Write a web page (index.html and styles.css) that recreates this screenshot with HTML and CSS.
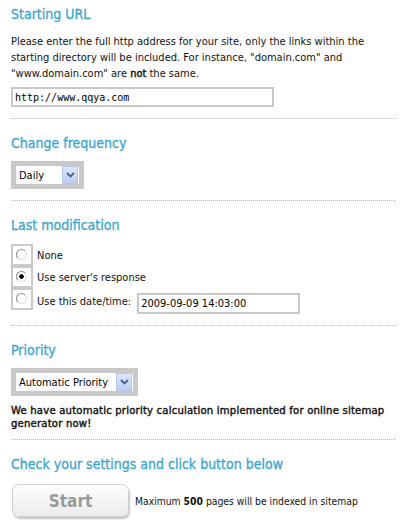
FILE: index.html
```html
<!DOCTYPE html>
<html lang="en">
<head>
    <meta charset="UTF-8">
    <title>Sitemap Generator</title>
    <link rel="stylesheet" href="styles.css">
</head>
<body>
    <form id="generator">
        <div class="section first">
            <h2>Starting URL</h2>
            <p class="hint">Please enter the full http address for your site, only the links within the starting directory will be included. For instance, "domain.com" and "www.domain.com" are <b>not</b> the same.</p>
            <input type="text" class="url-input" value="http://www.qqya.com">
        </div>

        <div class="section">
            <h2>Change frequency</h2>
            <div class="select-box">
                <select class="freq">
                    <option>Daily</option>
                    <option>Weekly</option>
                    <option>Monthly</option>
                </select>
                <span class="arrow"><svg width="9" height="6" viewBox="0 0 9 6"><path d="M1 1 L4.5 4.5 L8 1" fill="none" stroke="#4c5f86" stroke-width="1.8"/></svg></span>
            </div>
        </div>

        <div class="section">
            <h2>Last modification</h2>
            <div class="radios">
                <label class="radio-row">
                    <span class="radio-box"><input type="radio" name="lastmod"></span>
                    <span>None</span>
                </label>
                <label class="radio-row">
                    <span class="radio-box"><input type="radio" name="lastmod" checked></span>
                    <span>Use server's response</span>
                </label>
                <label class="radio-row with-date">
                    <span class="radio-box"><input type="radio" name="lastmod"></span>
                    <span>Use this date/time:</span>
                    <input type="text" class="date-input" value="2009-09-09 14:03:00">
                </label>
            </div>
        </div>

        <div class="section">
            <h2>Priority</h2>
            <div class="select-box">
                <select class="prio">
                    <option>Automatic Priority</option>
                    <option>None</option>
                </select>
                <span class="arrow"><svg width="9" height="6" viewBox="0 0 9 6"><path d="M1 1 L4.5 4.5 L8 1" fill="none" stroke="#4c5f86" stroke-width="1.8"/></svg></span>
            </div>
            <p class="note">We have automatic priority calculation implemented for online sitemap generator now!</p>
        </div>

        <div class="section last">
            <h2>Check your settings and click button below</h2>
            <div class="submit-row">
                <button type="button" class="start">Start</button>
                <span class="limit">Maximum <b>500</b> pages will be indexed in sitemap</span>
            </div>
        </div>
    </form>
</body>
</html>
```

FILE: styles.css
```css
body {
    margin: 0;
    background: #fff;
    color: #111;
    font-family: "DejaVu Sans Condensed", "DejaVu Sans", sans-serif;
    font-stretch: condensed;
    font-size: 11px;
}

#generator {
    width: 385px;
    padding-left: 11px;
}

.section {
    border-bottom: 1px dotted #bbb;
    padding: 14px 0 11px;
}

.section.first {
    padding-top: 4px;
}

.section.last {
    border-bottom: none;
}

h2 {
    margin: 0;
    font-size: 14px;
    line-height: 20px;
    font-weight: normal;
    -webkit-text-stroke: 0.3px #3aa6d1;
    color: #3aa6d1;
}

.hint {
    margin: 10px 0 5px;
    line-height: 16px;
}

.hint b {
    font-weight: normal;
    -webkit-text-stroke: 0.4px #111;
}

.url-input,
.date-input {
    box-sizing: border-box;
    display: block;
    border: 2px solid #c9c9c9;
    font-size: 11px;
    padding: 0 2px;
    outline: none;
}

.url-input {
    width: 263px;
    height: 20px;
    font-family: "DejaVu Sans Mono", monospace;
    font-size: 10px;
}

.date-input {
    width: 163px;
    height: 21px;
    margin-left: 6px;
    font-family: inherit;
}

.select-box {
    display: flex;
    align-items: flex-start;
    width: fit-content;
    margin-top: 8px;
    border: 5px solid #c9c9c9;
    background: #fff;
    height: 18px;
}

.select-box select {
    appearance: none;
    border: none;
    outline: none;
    background: transparent;
    font-family: inherit;
    font-size: 11px;
    height: 18px;
    padding: 0 0 0 3px;
}

.freq {
    width: 46px;
}

.prio {
    width: 100px;
}

.arrow {
    display: flex;
    align-items: center;
    justify-content: center;
    width: 14px;
    height: 16px;
    margin-right: 1px;
    border: 1px solid #b5c7ea;
    background: linear-gradient(#dce6fb, #bccdf3);
}

.radios {
    margin-top: 9px;
}

.radio-row {
    display: flex;
    align-items: center;
    height: 22px;
}

.radio-row.with-date {
    height: 26px;
}

.with-date .radio-box {
    align-self: flex-start;
}

.with-date .date-input {
    align-self: flex-end;
}

.radio-box {
    box-sizing: border-box;
    width: 22px;
    height: 22px;
    margin-right: 4px;
    border: 2px solid #c9c9c9;
    padding: 3px 0 0 3px;
}

.radio-box input {
    appearance: none;
    display: block;
    margin: 0;
    width: 11px;
    height: 11px;
    border-radius: 50%;
    border: 1px solid;
    border-color: #8a8a8a #e2e2e2 #e2e2e2 #8a8a8a;
    background: #fff;
}

.radio-box input:checked {
    background: radial-gradient(circle, #000 0 2px, #fff 2.5px);
}

.note {
    margin: 8px 0 -2px;
    font-size: 11.2px;
    line-height: 13px;
    letter-spacing: 0.2px;
    -webkit-text-stroke: 0.4px #111;
}

.submit-row {
    display: flex;
    align-items: center;
    margin-top: 10px;
}

.start {
    width: 117px;
    height: 33px;
    margin-left: 1px;
    border: 1px solid #cfcfcf;
    border-radius: 7px;
    background: linear-gradient(#fdfdfd, #ececec);
    box-shadow: 1px 2px 2px #c4c4c4;
    color: #9a9a9a;
    font-family: inherit;
    font-size: 17px;
    font-weight: bold;
}

.limit {
    margin-left: 6px;
    font-size: 10.3px;
}
```
